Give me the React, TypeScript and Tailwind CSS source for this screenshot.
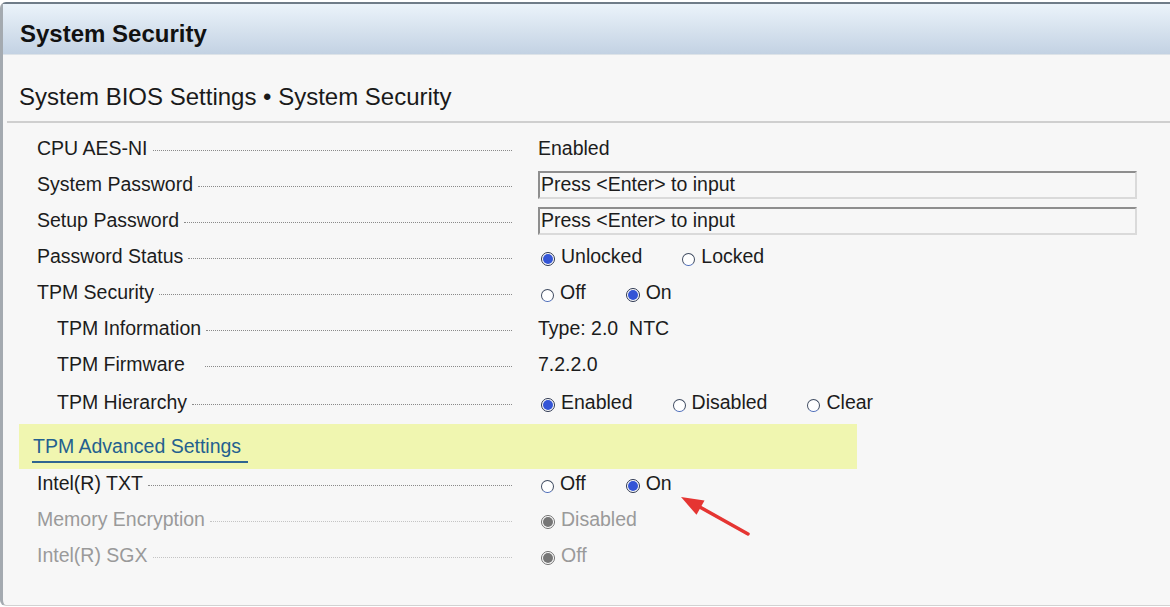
import type { ReactNode } from 'react'

type Opt = { label: string; checked?: boolean }

function Radio({ checked, disabled }: { checked?: boolean; disabled?: boolean }) {
  if (checked) {
    return (
      <span
        className={`w-[14px] h-[14px] rounded-full border flex items-center justify-center shrink-0 translate-y-[2px] bg-white ${
          disabled ? 'border-[#707070]' : 'border-[#2c3650]'
        }`}
      >
        <span className={`w-[10px] h-[10px] rounded-full ${disabled ? 'bg-[#767676]' : 'bg-[#3455d6]'}`}></span>
      </span>
    )
  }
  return (
    <span className="w-[13px] h-[13px] rounded-full border border-[#3f4b60] border-b-[#4a6ab8] bg-white shrink-0 translate-y-[2px]"></span>
  )
}

function Radios({ options, disabled }: { options: Opt[]; disabled?: boolean }) {
  return (
    <div className="flex items-center gap-[40px] pl-[3px]">
      {options.map((o) => (
        <div key={o.label} className="flex items-center gap-[6px]">
          <Radio checked={o.checked} disabled={disabled} />
          <span>{o.label}</span>
        </div>
      ))}
    </div>
  )
}

function InputBox() {
  return (
    <div className="w-[599px] h-[28px] flex items-center pl-[1px] border-2 border-t-[#8e8e8e] border-l-[#8e8e8e] border-r-[#dadada] border-b-[#dadada] bg-[#f7f7f7]">
      Press &lt;Enter&gt; to input
    </div>
  )
}

function Row({
  label,
  indent,
  disabled,
  wideGap,
  className = '',
  children,
}: {
  label: string
  indent?: boolean
  disabled?: boolean
  wideGap?: boolean
  className?: string
  children: ReactNode
}) {
  return (
    <div className={`h-[36px] flex items-center pl-[34px] ${disabled ? 'text-[#9a9a9a]' : 'text-[#1c1c1c]'} ${className}`}>
      <div className={`w-[475px] flex items-center ${indent ? 'pl-[20px]' : ''}`}>
        <span className="whitespace-nowrap">{label}</span>
        <span
          className={`flex-1 border-b border-dotted translate-y-[1px] ${wideGap ? 'ml-[20px]' : 'ml-[5px]'} ${
            disabled ? 'border-[#c4c4c4]' : 'border-[#8a8a8a]'
          }`}
        ></span>
      </div>
      <div className="ml-[26px]">{children}</div>
    </div>
  )
}

export default function App() {
  return (
    <div
      className="relative w-[1170px] h-[607px] bg-white pt-[2px] overflow-hidden text-[19.5px]"
      style={{ fontFamily: '"Liberation Sans", Arial, sans-serif' }}
    >
      <div className="h-[604px] flex flex-col bg-[#f7f7f7] border-t-2 border-t-[#6f7c88] border-l-[3px] border-l-[#a4aab0] border-b border-b-[#d2d2d2] rounded-tl-[6px] rounded-bl-[6px]">
        <div className="h-[51px] shrink-0 flex items-center pt-[9px] pl-[17px] bg-gradient-to-b from-[#ebf3fa] to-[#c3d2e3] border-b border-[#dde3e8]">
          <h1 className="text-[24px] font-bold text-[#111111] leading-none">System Security</h1>
        </div>

        <h2 className="pl-[16px] pt-[28px] pb-[10px] text-[24px] leading-[28px] text-[#1a1a1a]">
          System BIOS Settings • System Security
        </h2>
        <div className="ml-[4px] border-t-2 border-[#cfcfcf]"></div>

        <div className="pt-[8px] flex flex-col">
          <Row label="CPU AES-NI">Enabled</Row>
          <Row label="System Password">
            <InputBox />
          </Row>
          <Row label="Setup Password">
            <InputBox />
          </Row>
          <Row label="Password Status">
            <Radios options={[{ label: 'Unlocked', checked: true }, { label: 'Locked' }]} />
          </Row>
          <Row label="TPM Security">
            <Radios options={[{ label: 'Off' }, { label: 'On', checked: true }]} />
          </Row>
          <Row label="TPM Information" indent>
            <span className="whitespace-pre">Type: 2.0  NTC</span>
          </Row>
          <Row label="TPM Firmware" indent wideGap>
            7.2.2.0
          </Row>
          <Row label="TPM Hierarchy" indent className="mt-[2px]">
            <Radios options={[{ label: 'Enabled', checked: true }, { label: 'Disabled' }, { label: 'Clear' }]} />
          </Row>

          <div className="mt-[3px] -mb-[3px] ml-[16px] w-[838px] h-[45px] flex items-end pb-[6px] bg-[#f0f6b0]">
            <div className="ml-[13px] pl-[1px] pr-[7px] pb-[4px] border-b-2 border-[#2f6590] leading-[22px] text-[#23608f]">
              TPM Advanced Settings
            </div>
          </div>

          <Row label="Intel(R) TXT">
            <Radios options={[{ label: 'Off' }, { label: 'On', checked: true }]} />
          </Row>
          <Row label="Memory Encryption" disabled>
            <Radios options={[{ label: 'Disabled', checked: true }]} disabled />
          </Row>
          <Row label="Intel(R) SGX" disabled>
            <Radios options={[{ label: 'Off', checked: true }]} disabled />
          </Row>
        </div>
      </div>

      <svg className="absolute left-[676px] top-[490px] w-[80px] h-[50px] pointer-events-none" viewBox="0 0 80 50">
        <line x1="22" y1="16" x2="72" y2="44" stroke="#e53532" strokeWidth="3.5" strokeLinecap="round" />
        <polygon points="5,7 28.5,10.5 20.5,24.8" fill="#e53532" />
      </svg>
    </div>
  )
}
